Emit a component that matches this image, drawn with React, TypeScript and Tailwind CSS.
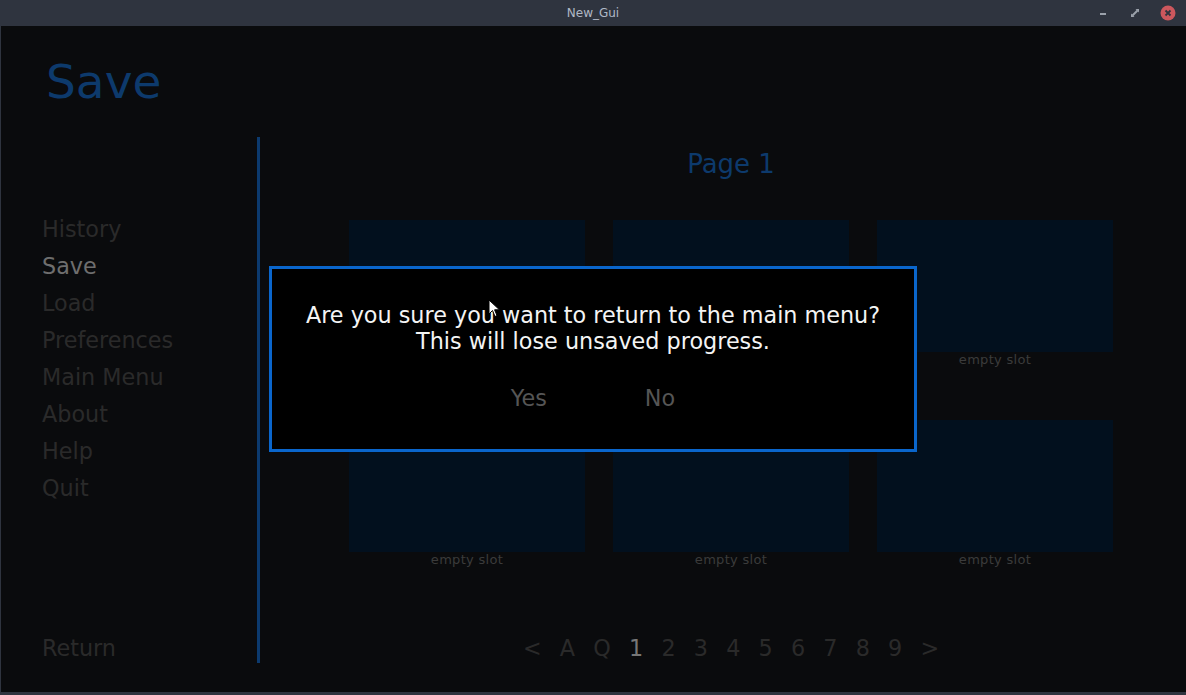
import React from 'react';

// --- Dados da tela ---
const navItems = ['History', 'Save', 'Load', 'Preferences', 'Main Menu', 'About', 'Help', 'Quit'];
const pages = ['<', 'A', 'Q', '1', '2', '3', '4', '5', '6', '7', '8', '9', '>'];
const font = { fontFamily: '"DejaVu Sans", "Liberation Sans", sans-serif' };

const TitleBar = () => (
    <div className="h-[26px] bg-[#2f343f] flex items-center justify-center relative shrink-0">
        <span className="text-[12px] text-[#afb8c6]">New_Gui</span>
        <div className="absolute right-[10px] top-0 h-full flex items-center gap-[18px]">
            <div className="w-[14px] flex justify-center">
                <div className="w-[6px] h-[2px] bg-[#9ba1ab] mt-[1px]" />
            </div>
            <svg width="14" height="14" viewBox="0 0 14 14">
                <path d="M7.5 3 L11 3 L11 6.5 Z" fill="#9ba1ab" />
                <path d="M6.5 11 L3 11 L3 7.5 Z" fill="#9ba1ab" />
                <path d="M9.5 4.5 L4.5 9.5" stroke="#9ba1ab" strokeWidth="2" />
            </svg>
            <svg width="16" height="16" viewBox="0 0 16 16">
                <circle cx="8" cy="8" r="7.5" fill="#cc575d" />
                <path d="M5.5 5.5 L10.5 10.5 M10.5 5.5 L5.5 10.5" stroke="#2f343f" strokeWidth="1.8" />
            </svg>
        </div>
    </div>
);

const SlotCard = () => (
    <div className="flex flex-col">
        <div className="h-[132px] bg-[#02101e]" />
        <div className="h-[15px] leading-[15px] text-center text-[13px] tracking-[0.3px] text-[#3b3b3b]">empty slot</div>
    </div>
);

const ConfirmDialog = () => (
    <div className="absolute left-[269px] top-[266px] w-[648px] h-[186px] bg-black border-[3px] border-[#0a66cc] flex flex-col items-center pt-[33px]">
        <p className="text-[22.3px] leading-[26px] text-[#f4f4f4] text-center">
            Are you sure you want to return to the main menu?<br />
            This will lose unsaved progress.
        </p>
        <div className="flex gap-[98px] mt-[31px] text-[22.3px] leading-[26px] text-[#555555]">
            <span>Yes</span>
            <span>No</span>
        </div>
    </div>
);

const Cursor = () => (
    <svg className="absolute left-[488px] top-[299px]" width="13" height="20" viewBox="0 0 13 20">
        <path d="M1 1 L1 15 L4.5 11.5 L7 17.5 L9 16.6 L6.6 10.8 L11.5 10.8 Z" fill="#ffffff" stroke="#000000" strokeWidth="1" strokeLinejoin="round" />
    </svg>
);

export default function App() {
    return (
        <div className="w-[1186px] h-[695px] bg-[#2f343f] flex flex-col relative overflow-hidden" style={font}>
            <TitleBar />

            {/* Conteúdo da janela */}
            <div className="flex-1 ml-[1px] mb-[3px] bg-[#0a0b0d] flex">
                {/* Coluna de navegação */}
                <div className="w-[256px] flex flex-col pl-[41px] pt-[32px] pb-[25px]">
                    <h1 className="text-[47px] leading-none pl-[4px] text-[#0d3a6c]">Save</h1>
                    <nav className="flex flex-col mt-[106px]">
                        {navItems.map((item) => (
                            <span key={item} className={`text-[22.3px] leading-[37px] ${item === 'Save' ? 'text-[#6e6e6e]' : 'text-[#2a2a2a]'}`}>{item}</span>
                        ))}
                    </nav>
                    <span className="mt-auto text-[22.3px] leading-[37px] text-[#2a2a2a]">Return</span>
                </div>

                <div className="w-[3px] bg-[#0c3a6e] mt-[111px] mb-[29px]" />

                {/* Slots */}
                <div className="flex-1 pl-[89px] pt-[123px]">
                    <div className="w-[764px] flex flex-col items-center">
                        <h2 className="text-[26px] leading-[30px] text-[#0d3a6c]">Page 1</h2>
                        <div className="grid grid-cols-[236px_236px_236px] gap-x-[28px] gap-y-[53px] mt-[41px]">
                            {[...Array(6)].map((_, i) => <SlotCard key={i} />)}
                        </div>
                        <div className="flex gap-[18.2px] mt-[68px] text-[22.3px] leading-[26px]">
                            {pages.map((p) => (
                                <span key={p} className={p === '1' ? 'text-[#777777]' : 'text-[#2a2a2a]'}>{p}</span>
                            ))}
                        </div>
                    </div>
                </div>
            </div>

            <ConfirmDialog />
            <Cursor />
        </div>
    );
}
